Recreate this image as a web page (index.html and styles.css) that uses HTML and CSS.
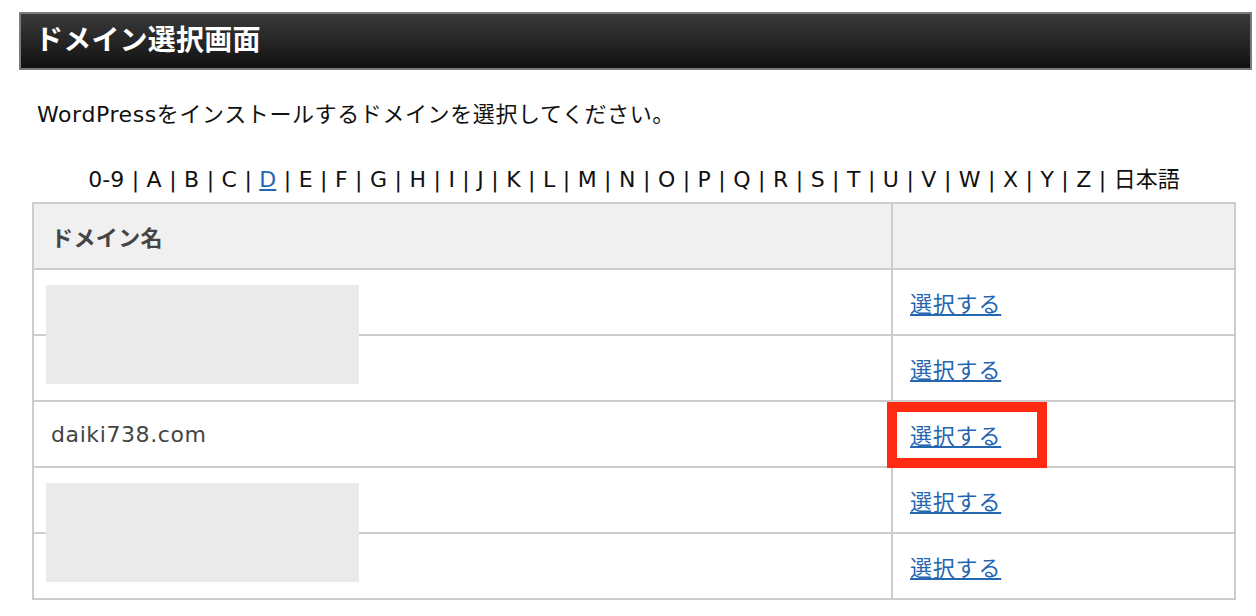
FILE: index.html
```html
<!DOCTYPE html>
<html lang="ja">
<head>
    <meta charset="UTF-8">
    <title>ドメイン選択画面</title>
    <link rel="stylesheet" href="styles.css">
</head>
<body>
    <div class="page">
        <h1 class="title-bar">ドメイン選択画面</h1>

        <div class="content">
            <p class="lead">WordPressをインストールするドメインを選択してください。</p>

            <div class="index-nav">
                0-9 | A | B | C | <a href="#">D</a> | E | F | G | H | I | J | K | L | M | N | O | P | Q | R | S | T | U | V | W | X | Y | Z | 日本語
            </div>

            <table class="domain-table">
                <thead>
                    <tr>
                        <th class="col-name">ドメイン名</th>
                        <th class="col-action"></th>
                    </tr>
                </thead>
                <tbody>
                    <tr>
                        <td class="masked"><span class="redact"></span></td>
                        <td><a href="#">選択する</a></td>
                    </tr>
                    <tr>
                        <td></td>
                        <td><a href="#">選択する</a></td>
                    </tr>
                    <tr>
                        <td>daiki738.com</td>
                        <td class="marked"><a href="#">選択する</a><span class="highlight"></span></td>
                    </tr>
                    <tr>
                        <td class="masked"><span class="redact"></span></td>
                        <td><a href="#">選択する</a></td>
                    </tr>
                    <tr>
                        <td></td>
                        <td><a href="#">選択する</a></td>
                    </tr>
                </tbody>
            </table>
        </div>
    </div>
</body>
</html>
```

FILE: styles.css
```css
body {
    margin: 0;
    background: #fff;
    color: #111;
    font-family: "DejaVu Sans", "Noto Sans CJK JP", sans-serif;
    font-size: 22px;
}
.page {
    padding: 12px 4px 0 19px;
}
.title-bar {
    margin: 0;
    height: 54px;
    line-height: 54px;
    padding-left: 14px;
    border: 2px solid #7b7b7b;
    background: linear-gradient(#3a3a3a, #111);
    color: #fff;
    font-size: 28px;
    font-weight: bold;
    letter-spacing: 0.2px;
}
.content {
    padding: 0 16px 0 13px;
}
.lead {
    margin: 0;
    padding: 31px 0 0 5px;
    height: 35px;
    line-height: 28px;
    letter-spacing: 0.6px;
}
.index-nav {
    text-align: center;
    height: 28px;
    line-height: 28px;
    padding: 30px 0 8px;
    word-spacing: 0.5px;
}
.index-nav a {
    color: #2566b0;
}
.domain-table {
    width: 100%;
    border-collapse: collapse;
    border: 2px solid #ccc;
}
.domain-table th,
.domain-table td {
    height: 64px;
    padding: 0 0 0 17px;
    border: 2px solid #ccc;
    text-align: left;
    vertical-align: middle;
    color: #444;
    letter-spacing: 0.6px;
}
.domain-table th {
    background: #f0f0f0;
    font-weight: bold;
    letter-spacing: 0.4px;
}
.col-name {
    width: 840px;
}
.domain-table a {
    color: #2566b0;
    letter-spacing: 0.8px;
}
.masked,
.marked {
    position: relative;
}
.redact {
    position: absolute;
    left: 12px;
    top: 15px;
    width: 313px;
    height: 99px;
    background: #eaeaea;
    z-index: 1;
}
.highlight {
    position: absolute;
    left: -6px;
    top: 0;
    width: 160px;
    height: 66px;
    box-sizing: border-box;
    border: 10px solid #ff2a12;
}
```
